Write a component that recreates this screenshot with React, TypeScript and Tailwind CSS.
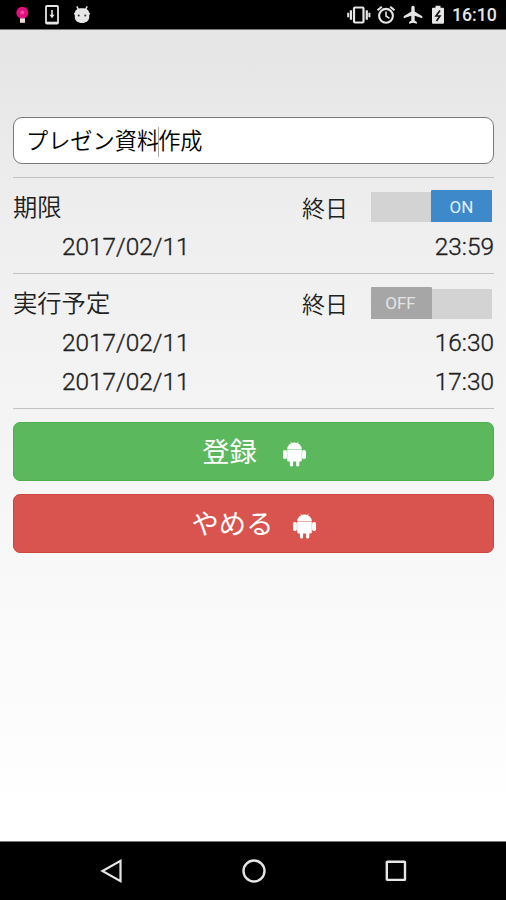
const sans = "font-['Roboto','Noto_Sans_CJK_JP',sans-serif]";

const AndroidIcon = () => (
    <svg className="mb-px h-[26px] w-[25px] shrink-0" viewBox="0 0 25 26" fill="#fff">
        <path d="M5.2 8.400a7.300 6.800 0 0 1 14.600 0z" />
        <path d="M8.500 .8l1.500 2.400M16.500 .8l-1.500 2.400" stroke="#fff" strokeWidth="0.700" />
        <path d="M5.200 9h14.600v10.200a1.400 1.400 0 0 1-1.400 1.400H17.300v3.300a1.600 1.600 0 0 1-3.200 0v-3.300h-3v3.300a1.600 1.600 0 0 1-3.200 0v-3.300H6.600a1.400 1.400 0 0 1-1.400-1.400z" />
        <rect x="1" y="9" width="3.900" height="9" rx="1.700" />
        <rect x="20.100" y="9" width="3.900" height="9" rx="1.700" />
    </svg>
);

const StatusBar = () => (
    <header className="flex h-[30px] shrink-0 items-center border-b border-[#777] bg-black text-[#e6e6e6]">
        <div className="flex items-center">
            <svg className="ml-[15px] h-[20px] w-[16px]" viewBox="0 0 16 20">
                <circle cx="7.300" cy="7.800" r="6" fill="#e0117f" />
                <circle cx="7.300" cy="7.500" r="2" fill="#f04a9e" />
                <path d="M5 13.300h5v4.500H5z" fill="#e9dede" />
            </svg>
            <svg className="ml-[13px] h-[22px] w-[16px]" viewBox="0 0 16 22" fill="none" stroke="currentColor">
                <rect x="2" y="2" width="12" height="17.500" rx="1" strokeWidth="1.800" />
                <path d="M2 18.800h12" strokeWidth="2.200" />
                <path d="M8 6v6" strokeWidth="1.600" />
                <path d="M5.500 10.800h5L8 14.200z" fill="currentColor" stroke="none" />
            </svg>
            <svg className="ml-[13px] h-[20px] w-[18px]" viewBox="0 0 18 20">
                <path d="M3.800 1.300L5.500 4.500M14.200 1.300L12.500 4.500" stroke="currentColor" strokeWidth="1.500" />
                <path d="M1.800 8.500C1.800 5 4.500 3.300 9 3.300s7.200 1.700 7.200 5.200V12c0 3.800-3 6-7.200 6s-7.200-2.200-7.200-6z" fill="currentColor" />
                <path d="M1 8.700h16" stroke="currentColor" strokeWidth="1.600" />
                <circle cx="5.700" cy="10.500" r="1" fill="#333" />
                <circle cx="12.300" cy="10.500" r="1" fill="#333" />
            </svg>
        </div>
        <div className="ml-auto flex items-center pt-px">
            <svg className="h-[20px] w-[24px]" viewBox="0 0 24 20" fill="none" stroke="currentColor">
                <rect x="7" y="2.500" width="9.500" height="15" rx="1" strokeWidth="2.200" />
                <path d="M3.900 5.200v9.600M19.800 5.200v9.600" strokeWidth="2.200" />
                <path d="M1.200 7.800v4.400M22.400 7.800v4.400" strokeWidth="2" />
            </svg>
            <svg className="ml-[5px] h-[20px] w-[20px]" viewBox="0 0 20 20" fill="none" stroke="currentColor">
                <circle cx="10" cy="10.800" r="6.900" strokeWidth="2.100" />
                <path d="M1.500 5.300l4.300-3.600M18.500 5.300l-4.300-3.600" strokeWidth="2.100" />
                <path d="M10 6.500V11l3.500 2.400" strokeWidth="1.600" />
            </svg>
            <svg className="ml-[7px] h-[20px] w-[20px]" viewBox="0 0 20 20" fill="currentColor">
                <path d="M19.300 13.200v-2L11.700 6.500V2.400a1.700 1.700 0 0 0-3.400 0v4.100L.7 11.200v2l7.600-2.400v4.700l-2.200 1.500v1.700l3.900-1 3.900 1V17l-2.200-1.500v-4.700z" />
            </svg>
            <svg className="ml-[8px] h-[20px] w-[14px]" viewBox="0 0 14 20">
                <path d="M4.500 .7h5v2H12a1 1 0 0 1 1 1v14a1 1 0 0 1-1 1H2a1 1 0 0 1-1-1v-14a1 1 0 0 1 1-1h2.500z" fill="currentColor" />
                <path d="M9 5.500l-4 5.500h4L5.500 16" fill="none" stroke="#111" strokeWidth="1.600" />
            </svg>
            <span className="mr-[9px] ml-[7px] w-[45px] whitespace-nowrap pt-[2px] text-[17.700px] leading-none font-medium">16:10</span>
        </div>
    </header>
);

const Toggle = ({ on }: { on: boolean }) => (
    <div
        className={`mr-[2px] flex h-[30px] w-[121px] items-end bg-[#d3d3d3] text-[17px] font-normal ${on ? "mb-px justify-end" : "justify-start"}`}
    >
        <span
            className={`flex h-[32px] w-[61px] items-center justify-center rounded-t-[1px] pt-[3px] ${on ? "bg-[#3d89c9] text-[#e4f1fb]" : "bg-[#a6a6a6] pr-[2px] text-[#e4e4e4]"}`}
        >
            {on ? "ON" : "OFF"}
        </span>
    </div>
);

type SectionProps = {
    title: string;
    allDay: boolean;
    rows: { date: string; time: string }[];
};

const Section = ({ title, allDay, rows }: SectionProps) => (
    <section className="border-b border-[#c3c3c3] pt-[10px] pb-[7px]">
        <div className="flex h-[39px] items-center font-[350]">
            <span className="pt-[2px] text-[24.300px] leading-none">{title}</span>
            <span className="mr-[23px] ml-auto pt-[3px] text-[23px] leading-none">終日</span>
            <Toggle on={allDay} />
        </div>
        {rows.map((row) => (
            <div
                key={row.time}
                className="flex h-[39px] items-center justify-between pt-[2px] pl-[49px] text-[24.400px] leading-none font-light [-webkit-text-stroke:0.35px_#202020]"
            >
                <span>{row.date}</span>
                <span>{row.time}</span>
            </div>
        ))}
    </section>
);

const App = () => (
    <div className={`flex h-[900px] w-[506px] flex-col overflow-hidden text-[#202020] ${sans}`}>
        <StatusBar />

        <main className="flex flex-1 flex-col bg-linear-to-b from-[#e5e5e5] from-0% via-[#efefef] via-25% to-white to-97% px-[13px] pt-[87px] pr-[12px]">
            <div className="flex h-[47px] items-center rounded-[9px] border-[1.500px] border-[#777b7b] bg-white pt-[2px] pl-[12px] text-[22.200px] leading-none font-[350] text-black">
                <span>プレゼン資料</span>
                <span className="-mr-px -ml-px h-[30px] w-px bg-[#aaa]" />
                <span>作成</span>
            </div>
            <div className="mt-[13px] border-t border-[#c3c3c3]">
                <Section title="期限" allDay rows={[{ date: "2017/02/11", time: "23:59" }]} />
                <Section
                    title="実行予定"
                    allDay={false}
                    rows={[
                        { date: "2017/02/11", time: "16:30" },
                        { date: "2017/02/11", time: "17:30" },
                    ]}
                />
            </div>

            <button className="mt-[13px] flex h-[59px] items-center justify-center gap-[25px] rounded-[7px] border border-[#4cae4c] bg-[#5cb85c] pt-[5px] pl-[2px] text-[27.300px] leading-none text-white">
                登録
                <AndroidIcon />
            </button>
            <button className="mt-[13px] flex h-[59px] items-center justify-center gap-[19px] rounded-[7px] border border-[#d0443f] bg-[#d9534f] pt-[5px] pl-[2px] text-[27.300px] leading-none text-white">
                やめる
                <AndroidIcon />
            </button>
        </main>

        <nav className="flex h-[59px] shrink-0 items-center border-t border-[#777] bg-black">
            <svg className="ml-[100px] h-[26px] w-[24px]" viewBox="0 0 24 26" fill="none" stroke="#e6e6e6" strokeWidth="2.200">
                <path d="M2.500 13L20.500 2.800v20.400z" />
            </svg>
            <svg className="ml-[117px] h-[26px] w-[26px]" viewBox="0 0 26 26" fill="none" stroke="#e6e6e6" strokeWidth="2.400">
                <circle cx="13" cy="13" r="10.500" />
            </svg>
            <svg className="ml-[117px] h-[26px] w-[26px]" viewBox="0 0 26 26" fill="none" stroke="#e6e6e6" strokeWidth="2.400">
                <rect x="2.800" y="3.700" width="18.200" height="18.200" rx="0.500" />
            </svg>
        </nav>
    </div>
);

export default App;
